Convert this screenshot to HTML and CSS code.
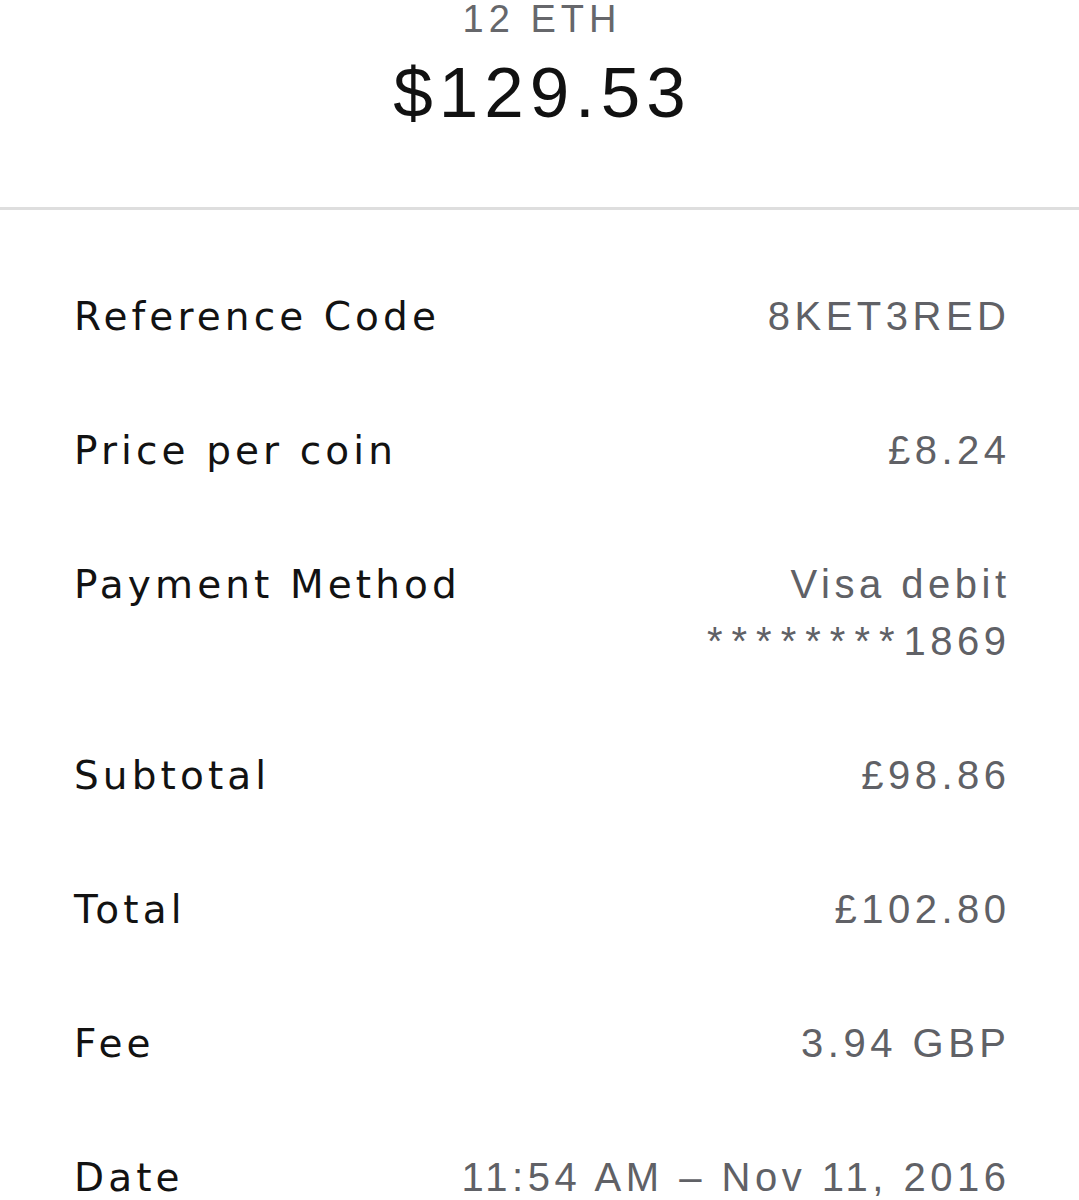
FILE: index.html
```html
<!DOCTYPE html>
<html lang="en">
<head>
<meta charset="utf-8">
<title>Transaction</title>
<link rel="stylesheet" href="styles.css">
</head>
<body>
<header class="summary">
  <div class="summary-coin">12 ETH</div>
  <div class="summary-amount">$129.53</div>
</header>
<main class="details">
  <div class="row">
    <div class="label">Reference Code</div>
    <div class="value">8KET3RED</div>
  </div>
  <div class="row">
    <div class="label">Price per coin</div>
    <div class="value">£8.24</div>
  </div>
  <div class="row">
    <div class="label">Payment Method</div>
    <div class="value">Visa debit<br><span class="mask">********</span>1869</div>
  </div>
  <div class="row">
    <div class="label">Subtotal</div>
    <div class="value">£98.86</div>
  </div>
  <div class="row">
    <div class="label">Total</div>
    <div class="value">£102.80</div>
  </div>
  <div class="row">
    <div class="label">Fee</div>
    <div class="value">3.94 GBP</div>
  </div>
  <div class="row">
    <div class="label">Date</div>
    <div class="value">11:54 AM – Nov 11, 2016</div>
  </div>
</main>
</body>
</html>
```

FILE: styles.css
```css
html, body {
  margin: 0;
  padding: 0;
  background: #ffffff;
}

body {
  font-family: "Liberation Sans", Arial, sans-serif;
  color: #111111;
  overflow: hidden;
}

.summary {
  display: flex;
  flex-direction: column;
  align-items: center;
  padding-top: 1px;
  padding-bottom: 74px;
  border-bottom: 3px solid #dedede;
}

.summary-coin {
  font-size: 38px;
  line-height: 36px;
  letter-spacing: 5px;
  color: #66676b;
  margin-right: -5px;
}

.summary-amount {
  margin-top: 16px;
  font-size: 71px;
  line-height: 80px;
  letter-spacing: 6px;
  color: #111111;
  margin-right: -6px;
}

.details {
  display: flex;
  flex-direction: column;
  padding: 39px 73px 0 74px;
}

.row {
  display: flex;
  justify-content: space-between;
  align-items: flex-start;
  padding: 39px 0 38px;
}

.label {
  font-family: "DejaVu Sans", sans-serif;
  font-size: 39px;
  line-height: 57px;
  letter-spacing: 4.1px;
  color: #121212;
}

.value {
  font-size: 40px;
  line-height: 57px;
  letter-spacing: 4.5px;
  margin-right: -4.5px;
  text-align: right;
  color: #606166;
}

.mask {
  letter-spacing: 9px;
}
```
